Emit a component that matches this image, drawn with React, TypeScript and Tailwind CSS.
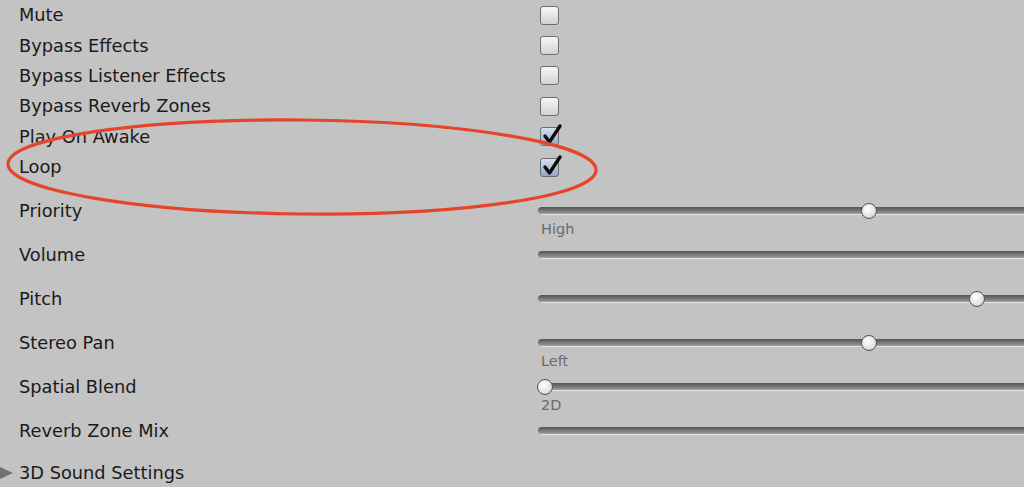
import React from 'react'

// ─── Datos ────────────────────────────────────────────────────
const toggles: { label: string; checked: boolean }[] = [
  { label: 'Mute', checked: false },
  { label: 'Bypass Effects', checked: false },
  { label: 'Bypass Listener Effects', checked: false },
  { label: 'Bypass Reverb Zones', checked: false },
  { label: 'Play On Awake', checked: true },
  { label: 'Loop', checked: true },
]

const sliders: { label: string; thumb: number | null; hint?: string }[] = [
  { label: 'Priority', thumb: 331, hint: 'High' },
  { label: 'Volume', thumb: null },
  { label: 'Pitch', thumb: 439 },
  { label: 'Stereo Pan', thumb: 331, hint: 'Left' },
  { label: 'Spatial Blend', thumb: 7, hint: '2D' },
  { label: 'Reverb Zone Mix', thumb: null },
]

// ─── Componente ───────────────────────────────────────────────
export default function App() {
  return (
    <div className="relative w-[1024px] h-[487px] overflow-hidden bg-[#c3c3c3] text-[#1a1a1a] font-['DejaVu_Sans',sans-serif] text-[17.8px]">
      {/* Toggles */}
      <div className="flex flex-col">
        {toggles.map((t) => (
          <div key={t.label} className="flex items-center h-[30.4px]">
            <span className="w-[540px] pl-[19px] leading-none">{t.label}</span>
            <Checkbox checked={t.checked} />
          </div>
        ))}
      </div>

      {/* Sliders */}
      <div className="flex flex-col mt-[6.8px]">
        {sliders.map((s) => (
          <div key={s.label} className="flex items-start h-[44px] pt-[11px]">
            <span className="w-[538px] pl-[19px] leading-[22px]">{s.label}</span>
            <div className="flex-1 flex flex-col">
              <div className="h-[22px] flex items-center">
                <Track thumb={s.thumb} />
              </div>
              {s.hint && (
                <span className="pl-[3px] text-[14.5px] leading-[14px] text-[#6b6b6b]">
                  {s.hint}
                </span>
              )}
            </div>
          </div>
        ))}
      </div>

      {/* Foldout */}
      <div className="flex items-center h-[40px]">
        <svg width="14" height="14" viewBox="0 0 14 14" className="mr-[5px]">
          <path d="M0 1 L13 7 L0 13 Z" fill="#727272" />
        </svg>
        <span className="leading-none">3D Sound Settings</span>
      </div>

      {/* Anotación */}
      <svg
        className="absolute left-0 top-0 pointer-events-none"
        width="1024"
        height="487"
        viewBox="0 0 1024 487"
      >
        <ellipse
          cx="302"
          cy="167"
          rx="294"
          ry="47"
          transform="rotate(0.6 302 167)"
          fill="none"
          stroke="#e5452b"
          strokeWidth="3.2"
        />
      </svg>
    </div>
  )
}

// ─── Sub-componentes ──────────────────────────────────────────
function Checkbox({ checked }: { checked: boolean }) {
  return (
    <div
      className={`relative w-[19px] h-[19px] rounded-[3px] border border-[#6d6d6d] ${
        checked
          ? 'bg-gradient-to-b from-[#d4e0f0] to-[#8fa8c9]'
          : 'bg-gradient-to-b from-[#f7f7f7] to-[#d2d2d2]'
      }`}
    >
      {checked && (
        <svg
          className="absolute left-[1px] top-[-5px] overflow-visible"
          width="20"
          height="22"
          viewBox="0 0 20 22"
        >
          <path
            d="M3 13 L7.5 19 L18 3"
            fill="none"
            stroke="#0d0d0d"
            strokeWidth="3.4"
            strokeLinecap="round"
            strokeLinejoin="round"
          />
        </svg>
      )}
    </div>
  )
}

function Track({ thumb }: { thumb: number | null }) {
  return (
    <div className="relative w-full h-[8px]">
      <div className="h-[7px] rounded-l-full bg-gradient-to-b from-[#555555] via-[#767676] to-[#a0a0a0]" />
      <div className="h-[1px] ml-[3px] bg-[#e6e6e6]" />
      {thumb !== null && (
        <div
          className="absolute top-[-4.5px] w-[16px] h-[16px] rounded-full border-[1.5px] border-[#555] bg-[radial-gradient(circle_at_40%_35%,#ffffff,#e4e4e4_55%,#b9b9b9)]"
          style={{ left: thumb - 8 }}
        />
      )}
    </div>
  )
}
